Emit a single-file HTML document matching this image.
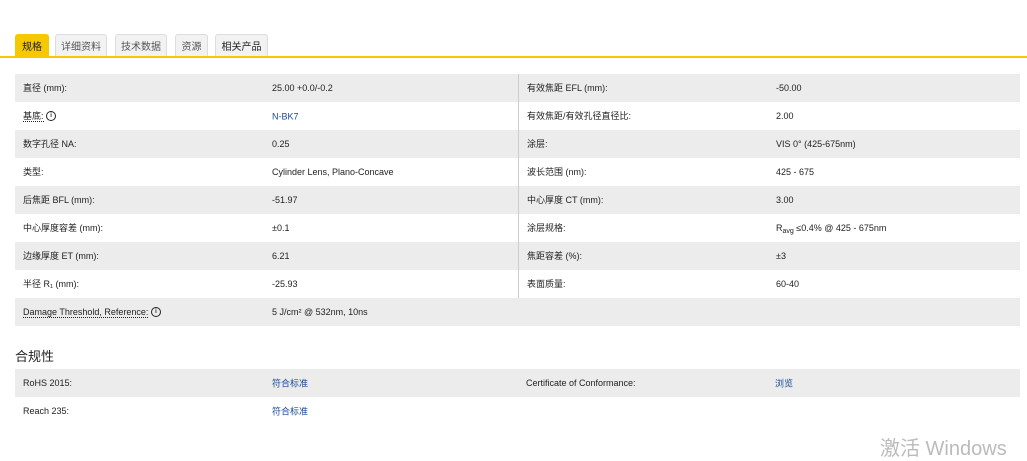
<!DOCTYPE html><html><head><meta charset="utf-8"><style>
body{margin:0;background:#fff;font-family:"Liberation Sans","Noto Sans CJK SC",sans-serif;font-size:9px;color:#222;width:1027px;height:452px;overflow:hidden;position:relative}
.tab{position:absolute;top:34px;height:23px;line-height:25px;font-size:10px;color:#555;background:#f2f2f2;border:1px solid #ddd;border-bottom:none;text-align:center;box-sizing:border-box;border-radius:3px 3px 0 0}
.line{position:absolute;top:56px;left:0;width:1027px;height:2px;background:#f5c800}
table{position:absolute;left:15px;border-collapse:collapse;width:1005px}
td{height:28px;padding:0 0 0 8px;vertical-align:middle;line-height:12px}
td span,td a{vertical-align:middle}
tr:nth-child(odd) td{background:#ececec}
.c3{border-left:1px solid #ccc}
a{color:#1a4a9a;text-decoration:none}
.i{display:inline-block;width:8px;height:8px;border:1px solid #222;border-radius:50%;font-size:6px;line-height:8px;text-align:center;font-weight:bold}
.u{border-bottom:1px dotted #222}
sub{font-size:7px;line-height:0;vertical-align:-2px}
</style></head><body>
<div class="tab" style="left:15px;width:34px;background:#f5c800;border-color:#f5c800;color:#222">规格</div>
<div class="tab" style="left:55px;width:52px">详细资料</div>
<div class="tab" style="left:115px;width:52px">技术数据</div>
<div class="tab" style="left:175px;width:33px">资源</div>
<div class="tab" style="left:215px;width:53px;color:#222">相关产品</div>
<div class="line"></div>
<table style="top:74px">
<tr><td style="width:241px">直径 (mm):</td><td style="width:246px">25.00 +0.0/-0.2</td><td class="c3" style="width:241px">有效焦距 EFL (mm):</td><td>-50.00</td></tr>
<tr><td><span class="u">基底:</span> <span class="i">i</span></td><td><a>N-BK7</a></td><td class="c3">有效焦距/有效孔径直径比:</td><td>2.00</td></tr>
<tr><td>数字孔径 NA:</td><td>0.25</td><td class="c3">涂层:</td><td>VIS 0° (425-675nm)</td></tr>
<tr><td>类型:</td><td>Cylinder Lens, Plano-Concave</td><td class="c3">波长范围 (nm):</td><td>425 - 675</td></tr>
<tr><td>后焦距 BFL (mm):</td><td>-51.97</td><td class="c3">中心厚度 CT (mm):</td><td>3.00</td></tr>
<tr><td>中心厚度容差 (mm):</td><td>±0.1</td><td class="c3">涂层规格:</td><td>R<sub>avg</sub> ≤0.4% @ 425 - 675nm</td></tr>
<tr><td>边缘厚度 ET (mm):</td><td>6.21</td><td class="c3">焦距容差 (%):</td><td>±3</td></tr>
<tr><td>半径 R₁ (mm):</td><td>-25.93</td><td class="c3">表面质量:</td><td>60-40</td></tr>
<tr><td><span class="u">Damage Threshold, Reference:</span> <span class="i">i</span></td><td>5 J/cm² @ 532nm, 10ns</td><td></td><td></td></tr>
</table>
<div style="position:absolute;left:15px;top:346px;font-size:13px">合规性</div>
<table style="top:369px">
<tr><td style="width:241px">RoHS 2015:</td><td style="width:246px"><a>符合标准</a></td><td style="width:241px">Certificate of Conformance:</td><td><a>浏览</a></td></tr>
<tr><td>Reach 235:</td><td><a>符合标准</a></td><td></td><td></td></tr>
</table>
<div style="position:absolute;left:880px;top:432px;font-size:20px;color:#bbb;white-space:nowrap">激活 Windows</div>
</body></html>
